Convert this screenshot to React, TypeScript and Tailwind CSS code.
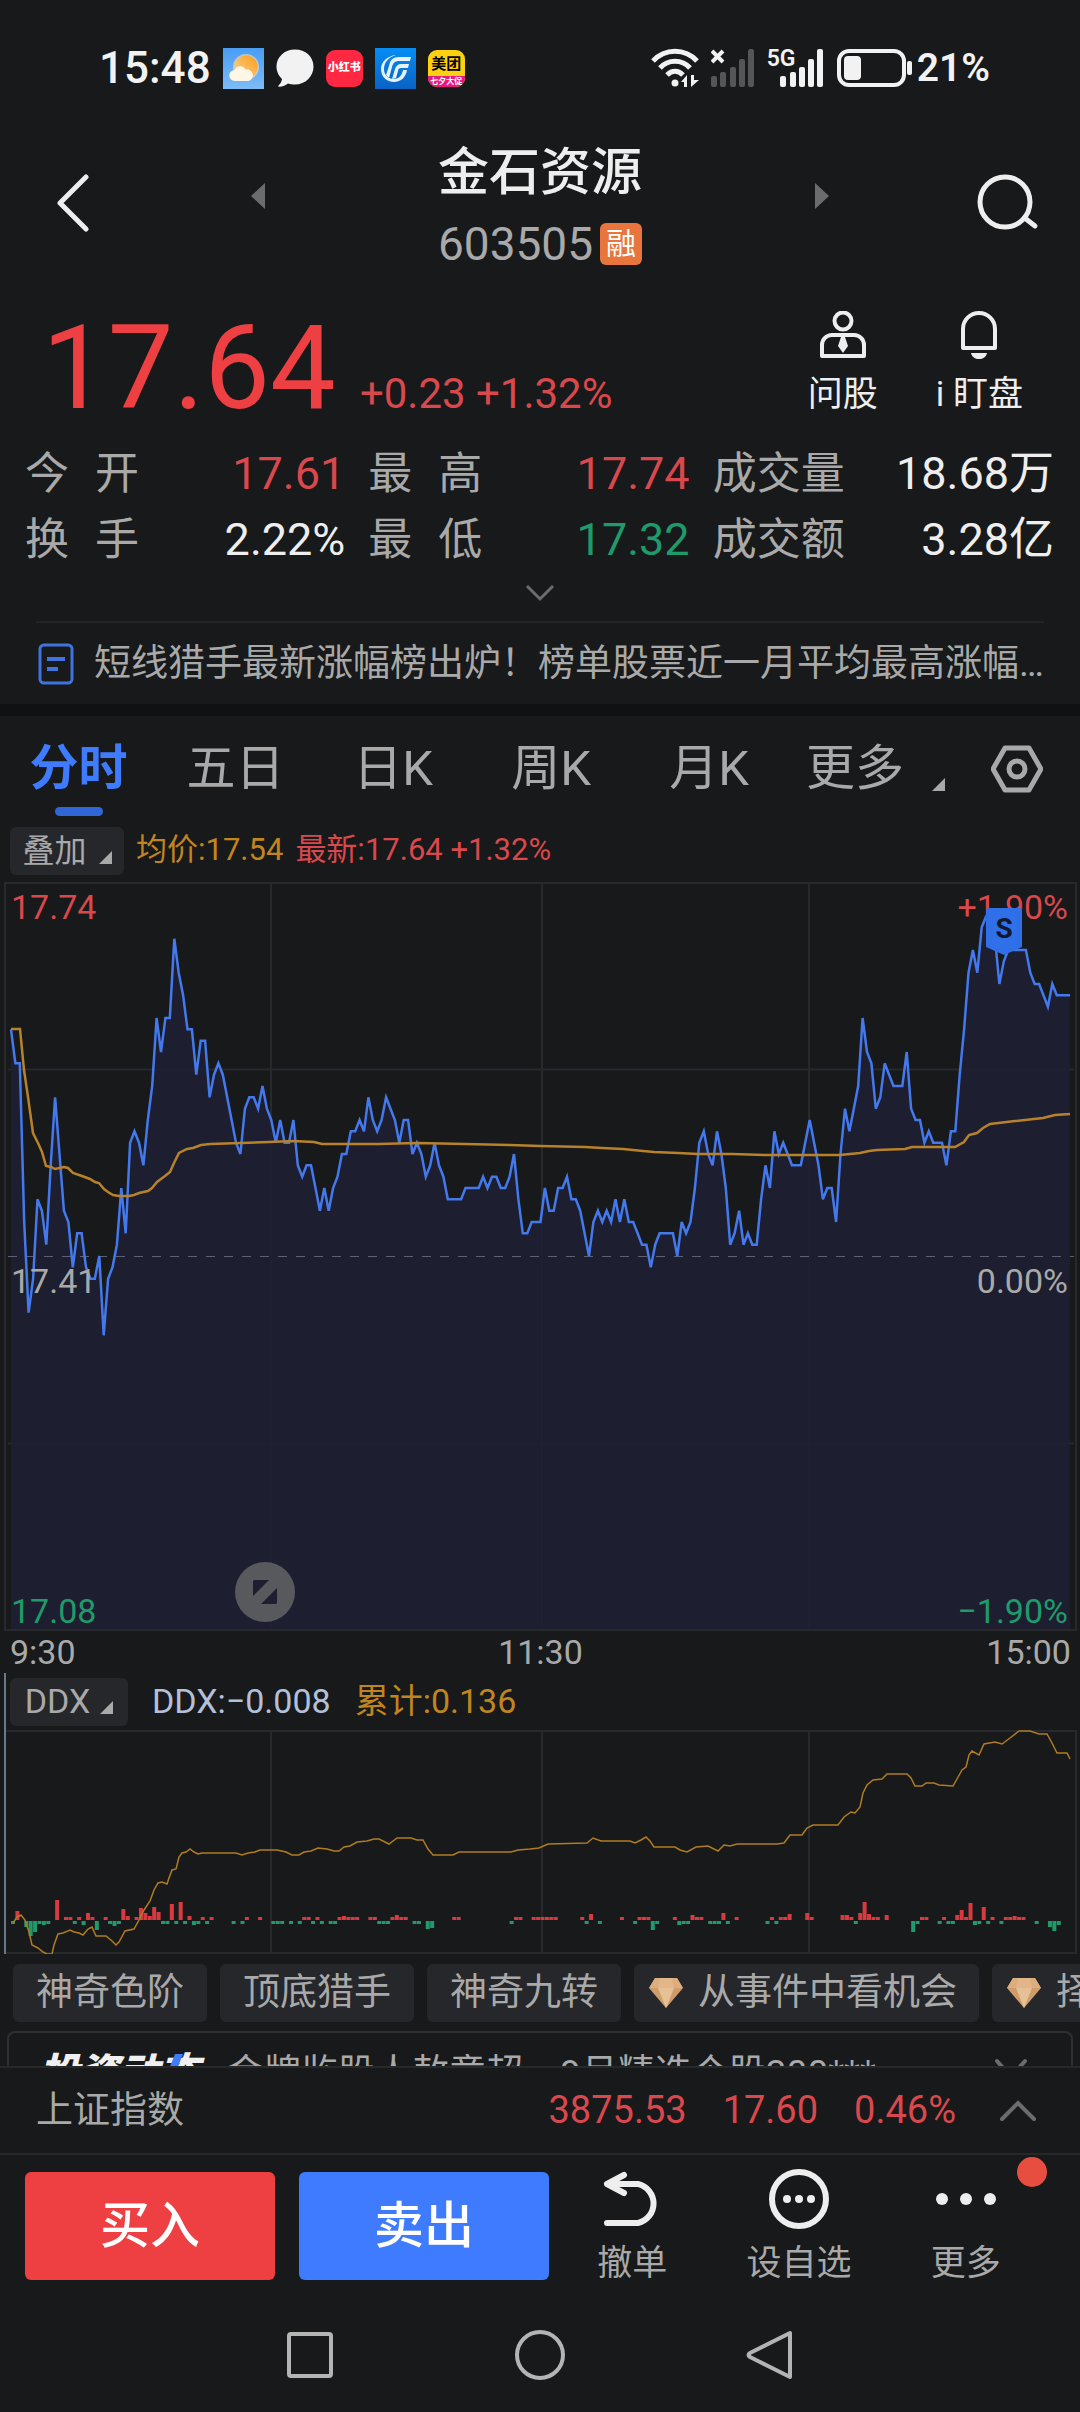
import type { ReactNode } from 'react';

// 每分钟价格相对昨收 17.41 的差值，单位：分
const PRICE_DIFF = [
  20, 17, 17, 3, -5, -2, 5, 4, 1, 8, 14, 9, 4, 3, -1, 2, 2, -1, -2, -2, 0, -7, -2, -1, 1, 6, 2, 10, 11, 10,
  8, 12, 15, 21, 18, 21, 21, 28, 25, 23, 20, 20, 16, 19, 19, 14, 16, 17, 16, 14, 12, 10, 9, 13, 14, 14, 13, 15, 13, 12,
  10, 12, 10, 10, 12, 8, 7, 8, 8, 6, 4, 6, 4, 6, 7, 9, 9, 11, 11, 12, 11, 14, 12, 11, 12, 14, 13, 12, 10, 12,
  12, 9, 10, 9, 7, 8, 10, 8, 7, 5, 5, 5, 5, 6, 6, 6, 6, 7, 6, 7, 7, 6, 6, 7, 9, 5, 2, 2, 3, 3,
  3, 6, 4, 4, 6, 6, 7, 5, 5, 4, 2, 0, 3, 4, 3, 4, 3, 5, 3, 5, 3, 3, 2, 1, 1, -1, 1, 2, 2, 2,
  2, 0, 3, 2, 3, 6, 10, 11, 9, 8, 11, 9, 6, 1, 2, 4, 1, 2, 1, 1, 5, 8, 6, 11, 9, 10, 9, 8, 8, 8,
  10, 12, 10, 8, 5, 6, 6, 3, 9, 13, 11, 13, 15, 21, 18, 17, 13, 14, 17, 16, 15, 15, 15, 18, 13, 12, 12, 10, 11, 10,
  10, 10, 8, 11, 11, 16, 20, 25, 27, 25, 29, 30, 30, 28, 24, 26, 27, 27, 27, 27, 27, 25, 24, 24, 23, 22, 24, 23, 23, 23, 23,
];

const AVG_LINE =
  '11,147 20,147 24,188 28,215 33,251 38,261 42,270 46,284 51,285 55,287 64,285 68,286 73,291 82,294 90,297 95,300 99,301 104,307 108,310 113,313 119,314 129,314 134,313 139,311 148,309 152,306 157,300 165,294 170,290 174,281 179,271 187,267 193,266 201,263 210,262 241,261 269,260 293,259 314,260 322,262 344,262 379,262 417,261 465,262 510,263 540,264 585,265 602,266 623,267 643,269 654,270 678,271 698,272 733,272 764,273 840,273 850,272 860,271 869,269 877,268 905,267 912,265 955,265 964,260 969,253 977,251 983,246 990,242 1015,239 1043,236 1055,233 1070,232';

const DDX_LINE =
  '13,193 17,187 21,185 25,190 29,202 32,215 38,218 43,222 47,224 52,224 54,215 58,204 63,203 70,200 74,202 79,203 83,205 88,199 92,197 96,206 106,206 112,211 116,215 119,212 125,201 134,199 139,190 144,180 150,171 154,160 158,153 162,152 167,154 169,148 172,140 176,139 179,127 182,123 186,122 190,119 194,122 198,124 202,123 236,123 242,125 248,123 255,122 260,120 277,120 286,122 292,125 299,125 304,122 311,121 318,118 327,119 334,121 339,121 344,117 350,116 357,112 367,111 374,109 379,109 389,114 397,108 411,108 417,110 423,110 428,119 433,125 453,125 459,122 511,122 518,120 530,119 539,118 548,114 587,113 593,108 601,111 630,111 635,113 641,110 646,107 650,111 654,117 675,117 680,120 687,122 696,117 708,116 718,121 724,115 730,116 737,114 777,114 784,113 790,105 802,105 807,98 813,95 838,95 844,87 851,82 855,83 860,77 863,63 867,55 873,50 882,49 887,44 907,44 911,48 915,56 922,56 926,53 934,53 939,55 953,56 957,49 962,40 966,37 969,25 972,21 979,25 984,14 995,12 1002,14 1010,8 1019,1 1030,1 1039,4 1047,4 1052,13 1057,23 1067,23 1070,29';

// [分钟, 柱高]，正为红、负为绿
const DDX_BARS: [number, number][] = [
  [0, -3], [1, 9], [3, -6], [4, -15], [5, -11], [6, -3], [7, -4], [8, -3], [10, 20], [12, 3], [13, 3], [14, -3],
  [15, 3], [16, -4], [17, 7], [18, 3], [19, -9], [21, 3], [22, -3], [23, -5], [24, -3], [25, 11], [26, 4], [28, 3],
  [29, 12], [30, 7], [31, 4], [32, 13], [33, 8], [34, -3], [35, -3], [36, 16], [37, -3], [38, 18], [39, -3], [40, 4],
  [41, -4], [42, -3], [43, 3], [44, -3], [45, 3], [50, -3], [52, -3], [53, 3], [56, 3], [59, -3], [60, -3], [61, -3],
  [63, -3], [65, -3], [66, 3], [67, 3], [68, -3], [69, 3], [70, -3], [72, -3], [73, -3], [74, 3], [75, 4], [76, 3],
  [77, 3], [78, 3], [81, 3], [82, 3], [83, -3], [84, -3], [85, -3], [86, 3], [87, 5], [88, 3], [89, 3], [91, -3],
  [92, -3], [94, -8], [95, -7], [100, 3], [101, 3], [113, -3], [114, 3], [115, 3], [118, 3], [119, 3], [120, 3],
  [121, 3], [122, 3], [123, 3], [129, 3], [130, -3], [131, 6], [133, -3], [138, 3], [141, -3], [142, 3], [143, 3],
  [144, 3], [145, -9], [146, -3], [150, 3], [151, -4], [152, -3], [153, -3], [154, 5], [155, 3], [156, 3], [158, -3],
  [159, -3], [160, -3], [161, 7], [162, -3], [164, 3], [171, -3], [172, 3], [173, -3], [174, 3], [175, 3], [176, 6],
  [180, 7], [181, 3], [188, 5], [189, 5], [190, 3], [191, -3], [192, 7], [193, 18], [194, 6], [195, 3], [196, 3],
  [198, 5], [204, -11], [205, -3], [206, 3], [207, 3], [210, -3], [211, 3], [212, -3], [213, -3], [214, 5], [215, 10],
  [216, 3], [217, 17], [218, -4], [219, -3], [220, 13], [221, -3], [222, 3], [224, -3], [225, 3], [226, 3], [227, 4],
  [228, 3], [229, 3], [232, -3], [235, -6], [236, -10], [237, -4],
];

const LEFT = 11;
const STEP = 1059 / 240;
const ZERO_Y = 374;
const CENT = 374 / 33;

const minuteX = (i: number) => LEFT + i * STEP;
const pricePoints = PRICE_DIFF.map((d, i) => `${minuteX(i).toFixed(1)},${(ZERO_Y - d * CENT).toFixed(1)}`).join(' ');

const STATS = [
  { label: '今开', value: '17.61', color: 'text-[#d9484c]' },
  { label: '最高', value: '17.74', color: 'text-[#d9484c]' },
  { label: '成交量', value: '18.68万', color: 'text-[#eeeeee]' },
  { label: '换手', value: '2.22%', color: 'text-[#eeeeee]' },
  { label: '最低', value: '17.32', color: 'text-[#1f9a6b]' },
  { label: '成交额', value: '3.28亿', color: 'text-[#eeeeee]' },
];

const TABS = ['分时', '五日', '日K', '周K', '月K'];

const CHIPS = [
  { name: '神奇色阶', vip: false },
  { name: '顶底猎手', vip: false },
  { name: '神奇九转', vip: false },
  { name: '从事件中看机会', vip: true },
  { name: '择时', vip: true },
];

const Corner = () => (
  <svg className="h-[13px] w-[13px] shrink-0" viewBox="0 0 12 12" fill="#a9a9a9">
    <path d="M12 0v12H0z" />
  </svg>
);

const StatusBar = () => (
  <div className="flex h-[136px] items-center justify-between pl-[99px] pr-[90px] text-[#f2f2f2]">
    <div className="flex items-center gap-3">
      <span className="text-[44px] font-medium leading-[48px]">15:48</span>
      {/* 天气 */}
      <svg className="h-[41px] w-[41px]" viewBox="0 0 41 41">
        <defs>
          <linearGradient id="sky" x1="0" y1="0" x2="0" y2="1">
            <stop offset="0" stopColor="#4a9cf5" />
            <stop offset="1" stopColor="#7dbcf8" />
          </linearGradient>
          <linearGradient id="sun" x1="1" y1="0" x2="0" y2="1">
            <stop offset="0" stopColor="#fb9a1d" />
            <stop offset="1" stopColor="#fdd68f" />
          </linearGradient>
        </defs>
        <rect width="41" height="41" fill="url(#sky)" />
        <circle cx="23" cy="19" r="13" fill="#f9e3b0" opacity="0.6" />
        <circle cx="23" cy="19" r="11.5" fill="url(#sun)" />
        <path d="M12 33a5.500 5.500 0 0 1-.5-11 6 6 0 0 1 11-.5 5 5 0 0 1 3 11.500z" fill="#fff6e6" />
      </svg>
      <svg className="h-[38px] w-[38px]" viewBox="0 0 38 38" fill="#f2f2f2">
        <path d="M19 .5C8.500.5.5 8 .5 17.500c0 5.500 2.500 9.500 5.500 12.500-.5 3-1.500 4.500-3.500 6.500-.5 1 0 1.500 1 1.300 3.500-.3 6-1.300 8.500-3.300 2 .7 4.500 1 7 1 10.500 0 18.500-8 18.500-18S29.500.5 19 .5z" />
      </svg>
      <span className="flex h-[37px] w-[37px] items-center justify-center rounded-[9px] bg-[#ff2741] text-[11px] font-black text-white">
        小红书
      </span>
      <svg className="h-[41px] w-[41px]" viewBox="0 0 41 41">
        <defs>
          <linearGradient id="broker" x1="0" y1="0" x2="0" y2="1">
            <stop offset="0" stopColor="#058ef5" />
            <stop offset="1" stopColor="#0a62c4" />
          </linearGradient>
        </defs>
        <rect width="41" height="41" fill="url(#broker)" />
        <path
          d="M21 7C12 8 6 14 6 21c0 8 6 13 13 13s12-5 13-12h-4c-1 5-4 9-9 9-6 0-10-4-10-10 0-7 5-12 12-14z"
          fill="#e6f2ff"
        />
        <path d="M36 9l-1 4H24c-4 0-6 2-7 6l-3 11-3-3 3-9c1-6 4-9 10-9zM34 16l-1 4h-7c-2 0-3 1-3 3l-2 7-4 1 3-10c1-3 3-5 6-5z" fill="#e6f2ff" />
      </svg>
      <span className="flex h-[37px] w-[37px] flex-col items-center overflow-hidden rounded-[9px] bg-[#ffd00f] text-black">
        <span className="h-[26px] text-[15px] font-bold leading-[28px]">美团</span>
        <span className="w-full grow bg-[#e6197f] text-center text-[8px] font-bold leading-[11px] text-white">七夕大促</span>
      </span>
    </div>
    <div className="flex items-center gap-3">
      <svg className="h-[40px] w-[48px]" viewBox="0 0 48 40" fill="none" stroke="#f2f2f2" strokeWidth="5">
        <path d="M2 13c12-13 32-13 44 0M9 20c8-9 22-9 30 0M16 27c5-5 11-5 16 0" />
        <circle cx="24" cy="35" r="3.500" fill="#f2f2f2" stroke="none" />
        <path d="M30 34l6-7v12h-3v-5zM40 27v12l8-7h-5v-5z" fill="#f2f2f2" stroke="none" />
      </svg>
      <svg className="h-[40px] w-[44px]" viewBox="0 0 44 40" stroke="#f2f2f2" strokeWidth="4">
        <path d="M1 3l11 11M12 3L1 14" fill="none" />
        <g fill="#555658" stroke="none">
          <rect x="0" y="28" width="6" height="11" rx="2" />
          <rect x="9" y="24" width="6" height="15" rx="2" />
          <rect x="19" y="19" width="6" height="20" rx="2" />
          <rect x="28" y="11" width="6" height="28" rx="2" />
          <rect x="37" y="1" width="6" height="38" rx="2" />
        </g>
      </svg>
      <div className="relative h-[40px] w-[57px]">
        <span className="absolute left-0 top-0 text-[23px] font-semibold leading-[22px]">5G</span>
        <svg className="h-[40px] w-[57px]" viewBox="0 0 57 40" fill="#f2f2f2">
          <rect x="13" y="28" width="6" height="11" rx="2" />
          <rect x="23" y="24" width="6" height="15" rx="2" />
          <rect x="32" y="19" width="6" height="20" rx="2" />
          <rect x="41" y="11" width="6" height="28" rx="2" />
          <rect x="50" y="1" width="6" height="38" rx="2" />
        </svg>
      </div>
      <div className="flex items-center gap-1">
        <svg className="h-[40px] w-[77px]" viewBox="0 0 77 40">
          <rect x="3" y="3" width="65" height="34" rx="10" fill="none" stroke="#f2f2f2" strokeWidth="4" />
          <rect x="8" y="8" width="17" height="24" rx="4" fill="#f2f2f2" />
          <rect x="71" y="13" width="5" height="14" rx="2" fill="#f2f2f2" />
        </svg>
        <span className="text-[39px] font-semibold leading-[48px]">21%</span>
      </div>
    </div>
  </div>
);

const Header = () => (
  <header className="grid grid-cols-[1fr_auto_1fr] items-center pb-[46px] pt-[7px]">
    <div className="flex items-center justify-between pl-[55px] pr-[173px]">
      <button aria-label="返回">
        <svg className="h-[60px] w-[36px]" viewBox="0 0 36 60" fill="none" stroke="#eeeeee" strokeWidth="5" strokeLinecap="round" strokeLinejoin="round">
          <path d="M31 3L5 29l26 26" />
        </svg>
      </button>
      <button aria-label="上一只" className="pb-4">
        <svg className="h-[26px] w-[14px]" viewBox="0 0 14 26" fill="#6b6c6d">
          <path d="M14 0v26L0 13z" />
        </svg>
      </button>
    </div>
    <div className="flex flex-col items-center">
      <h1 className="text-[51px] font-medium leading-[60px] text-[#eeeeee]">金石资源</h1>
      <div className="mt-5 flex items-center gap-[7px]">
        <span className="text-[46px] leading-[42px] text-[#a9a9a9]">603505</span>
        <span className="flex h-[42px] w-[42px] items-center justify-center rounded-md bg-[#e8763c] text-[30px] leading-[42px] text-white">
          融
        </span>
      </div>
    </div>
    <div className="flex items-center justify-between pl-[173px] pr-10">
      <button aria-label="下一只" className="pb-4">
        <svg className="h-[26px] w-[14px]" viewBox="0 0 14 26" fill="#6b6c6d">
          <path d="M0 0v26l14-13z" />
        </svg>
      </button>
      <button aria-label="搜索">
        <svg className="h-[60px] w-[64px]" viewBox="0 0 64 60" fill="none" stroke="#eeeeee" strokeWidth="5" strokeLinecap="round">
          <circle cx="29" cy="28" r="25" />
          <path d="M50 45l9 7" />
        </svg>
      </button>
    </div>
  </header>
);

const QuoteAction = ({ label, children }: { label: string; children: ReactNode }) => (
  <button className="flex flex-col items-center gap-4 text-[35px] leading-10 text-[#eeeeee]">
    {children}
    {label}
  </button>
);

const Quote = () => (
  <section>
    <div className="flex items-start justify-between pl-[42px] pr-[57px]">
      <div className="flex items-baseline gap-6">
        <span className="text-[117px] leading-[114px] text-[#ee3f43]">17.64</span>
        <span className="text-[42px] text-[#d9484c]">+0.23 +1.32%</span>
      </div>
      <div className="flex gap-[58px]">
        <QuoteAction label="问股">
          <svg className="h-12 w-12" viewBox="0 0 48 48" fill="none" stroke="#eeeeee" strokeWidth="4">
            <circle cx="24" cy="10" r="8.500" />
            <path d="M13 24h22a10 10 0 0 1 10 10v11H3V34a10 10 0 0 1 10-10z" strokeLinejoin="round" />
            <path d="M22 26h4l3 9-5 7-5-7z" fill="#eeeeee" stroke="none" />
          </svg>
        </QuoteAction>
        <QuoteAction label="i 盯盘">
          <svg className="h-12 w-12" viewBox="0 0 48 48" fill="none" stroke="#eeeeee" strokeWidth="4">
            <path d="M8 37V18a16 16 0 0 1 32 0v19z" strokeLinejoin="round" />
            <path d="M16 42h16c-1 4-4 6-8 6s-7-2-8-6z" fill="#eeeeee" stroke="none" />
          </svg>
        </QuoteAction>
      </div>
    </div>
    <dl className="grid grid-cols-[320fr_321fr_341fr] gap-x-[23px] pl-[25px] pr-[26px] pt-4 text-[44px] leading-[66px]">
      {STATS.map((s) => (
        <div key={s.label} className="flex justify-between">
          <dt className={s.label.length === 2 ? 'flex gap-[26px] text-[#a9a9a9]' : 'text-[#a9a9a9]'}>
            {s.label.length === 2 ? s.label.split('').map((c) => <span key={c}>{c}</span>) : s.label}
          </dt>
          <dd className={`text-[45px] ${s.color}`}>{s.value}</dd>
        </div>
      ))}
    </dl>
    <div className="mx-9 flex h-[50px] justify-center border-b-2 border-[#222426] pt-[10px]">
      <button aria-label="展开" className="self-start">
        <svg className="h-5 w-8" viewBox="0 0 32 20" fill="none" stroke="#6b6c6d" strokeWidth="3">
          <path d="M3 3l13 13L29 3" />
        </svg>
      </button>
    </div>
    <a href="#news" className="flex h-[81px] items-center gap-5 pl-[38px] pr-9">
      <svg className="h-[42px] w-9 shrink-0" viewBox="0 0 36 42" fill="none" stroke="#4173e0" strokeWidth="3">
        <rect x="2" y="2" width="32" height="38" rx="4" />
        <path d="M9 16h18M9 26h11" strokeWidth="4" />
      </svg>
      <span className="truncate text-[37px] leading-[48px] text-[#a9a9a9]">
        短线猎手最新涨幅榜出炉！榜单股票近一月平均最高涨幅...
      </span>
    </a>
  </section>
);

const Tabs = () => (
  <nav className="grid h-[104px] grid-cols-[157fr_157fr_158fr_158fr_158fr_292fr] pt-px text-[49px] text-[#a9a9a9]">
    {TABS.map((tab, i) => (
      <button key={tab} className={i === 0 ? 'relative font-bold text-[#3f7bff]' : ''}>
        {tab}
        {i === 0 && <span className="absolute bottom-1 left-1/2 h-[9px] w-12 -translate-x-1/2 rounded-full bg-[#3066d6]" />}
      </button>
    ))}
    <div className="flex items-center justify-between pl-[18px] pr-[37px]">
      <button className="flex items-center gap-[28px]">
        更多
        <span className="pt-8">
          <Corner />
        </span>
      </button>
      <button aria-label="设置">
        <svg className="h-[50px] w-[52px]" viewBox="0 0 52 50" fill="none" stroke="#a9a9a9" strokeWidth="5" strokeLinejoin="round">
          <path d="M14 4h24l12 21-12 21H14L2 25z" />
          <circle cx="26" cy="25" r="8" />
        </svg>
      </button>
    </div>
  </nav>
);

const Expand = () => (
  <svg className="h-6 w-6" viewBox="0 0 24 24" fill="#1e1e30">
    <path d="M1 0h15L0 16V1zM24 8v15l-1 1H8z" />
  </svg>
);

const PriceChart = () => (
  <section>
    <div className="flex h-[62px] items-center gap-3 pl-[10px] text-[31px]">
      <button className="flex h-12 w-[114px] items-center justify-center gap-3 rounded-md bg-[#25272b] text-[32px] text-[#a9a9a9]">
        叠加
        <span className="pt-3">
          <Corner />
        </span>
      </button>
      <span className="pb-px text-[#c0851f]">均价:17.54</span>
      <span className="pb-px text-[#d9484c]">最新:17.64 +1.32%</span>
    </div>
    <div className="relative text-[34px] leading-10">
      <svg className="block w-full" viewBox="0 0 1080 749">
        <g stroke="#27292c" strokeWidth="2" fill="none">
          <rect x="5" y="1" width="1071" height="747" />
          <path d="M271 0v749M542 0v749M809 0v749" />
          <path d="M8 187.500h1066M8 561.500h1066" />
        </g>
        <polygon points={`11,747 ${pricePoints} 1070,747`} fill="#1f1f33" fillOpacity="0.88" />
        <path d="M8 374.500h1066" stroke="#5f6075" strokeWidth="1" strokeDasharray="9 9" />
        <polyline points={pricePoints} fill="none" stroke="#4379ec" strokeWidth="2.500" />
        <polyline points={AVG_LINE} fill="none" stroke="#b8822a" strokeWidth="2.500" />
      </svg>
      <span className="absolute left-[11px] top-[5px] text-[#d9484c]">17.74</span>
      <span className="absolute right-3 top-[5px] text-[#d9484c]">+1.90%</span>
      <span className="absolute left-[11px] top-[379px] text-[#a9a9a9]">17.41</span>
      <span className="absolute right-3 top-[379px] text-[#a9a9a9]">0.00%</span>
      <span className="absolute bottom-0 left-[11px] text-[#1f9a6b]">17.08</span>
      <span className="absolute bottom-0 right-3 text-[#1f9a6b]">−1.90%</span>
      <span className="absolute right-[58px] top-[26px] h-[47px] w-9">
        <svg className="absolute inset-0" viewBox="0 0 36 47" fill="#2f6fe8">
          <path d="M3 0h30a3 3 0 0 1 3 3v36l-18 8L0 39V3a3 3 0 0 1 3-3z" />
        </svg>
        <span className="absolute inset-x-0 top-0 text-center text-[28px] font-bold leading-[42px] text-[#11182e]">S</span>
      </span>
      <button
        aria-label="横屏"
        className="absolute bottom-[9px] left-[235px] flex h-[60px] w-[60px] items-center justify-center rounded-full bg-[#58595c]"
      >
        <Expand />
      </button>
    </div>
    <div className="grid grid-cols-3 pl-[10px] pr-[9px] text-[34px] leading-[42px] text-[#a9a9a9]">
      <span>9:30</span>
      <span className="text-center">11:30</span>
      <span className="text-right">15:00</span>
    </div>
  </section>
);

const DdxChart = () => (
  <section className="relative">
    <span className="absolute bottom-0 left-[4px] top-0 w-[2px] bg-[#6b7888]" />
    <div className="flex h-[57px] items-center gap-6 pl-[10px] text-[34px]">
      <button className="flex h-12 w-[118px] items-center justify-center gap-[10px] rounded-md bg-[#25272b] text-[#a9a9a9]">
        DDX
        <span className="pt-3">
          <Corner />
        </span>
      </button>
      <span className="text-[#b4c0da]">DDX:−0.008</span>
      <span className="text-[#c0851f]">累计:0.136</span>
    </div>
    <svg className="block w-full" viewBox="0 0 1080 224">
      <g stroke="#27292c" strokeWidth="2" fill="none">
        <path d="M5 1h1071v222H5M271 0v224M542 0v224M809 0v224" />
      </g>
      {DDX_BARS.map(([i, v]) => (
        <rect
          key={i}
          x={minuteX(i)}
          y={v > 0 ? 190 - v : 191}
          width="4"
          height={Math.abs(v)}
          fill={v > 0 ? '#d93a40' : '#1f9a6b'}
        />
      ))}
      <polyline points={DDX_LINE} fill="none" stroke="#b07c22" strokeWidth="1.500" />
    </svg>
  </section>
);

const Diamond = () => (
  <svg className="h-[32px] w-[34px] shrink-0" viewBox="0 0 34 32">
    <path d="M6 1h22l6 10-17 20L0 11z" fill="#cf9d6b" />
    <path d="M6 1h22l6 10H0z" fill="#dcae7e" />
    <path d="M9 11h16l-8 20z" fill="#e6c196" />
    <path d="M11 1h12l2 10H9z" fill="#e2b688" />
  </svg>
);

const Chips = () => (
  <div className="flex gap-[13px] overflow-hidden pl-[13px] pt-[10px]">
    {CHIPS.map((chip) => (
      <button
        key={chip.name}
        className={
          chip.vip
            ? 'flex h-[58px] shrink-0 items-center gap-[15px] rounded-md bg-[#25272b] pl-[15px] pr-[22px] text-[37px] text-[#a9a9a9]'
            : 'flex h-[58px] shrink-0 items-center rounded-md bg-[#25272b] px-[23px] text-[37px] text-[#a9a9a9]'
        }
      >
        {chip.vip && <Diamond />}
        {chip.name}
      </button>
    ))}
  </div>
);

const NewsCard = () => (
  <div className="mx-[7px] mt-[9px] h-[35px] overflow-hidden rounded-t-lg border-2 border-b-0 border-[#2d2f32]">
    <div className="flex h-[82px] items-center pl-[30px] pr-[42px]">
      <span className="relative text-[40px] font-black italic leading-[48px] text-[#f0f0f0]">
        投资动态
        <svg className="absolute right-4 top-1 h-10 w-6" viewBox="0 0 24 40">
          <path d="M16 0h8L8 40H0z" fill="#3f7bff" />
        </svg>
      </span>
      <span className="ml-7 grow text-[37px] leading-[48px] text-[#a9a9a9]">金牌监股人敖意超，9月精选个股300***</span>
      <svg className="mb-2 h-6 w-9" viewBox="0 0 36 24" fill="none" stroke="#6b6c6d" strokeWidth="4" strokeLinecap="round">
        <path d="M4 3l14 16L32 3" />
      </svg>
    </div>
  </div>
);

const IndexBar = () => (
  <div className="flex h-[87px] items-center border-t-2 border-[#26282a] pl-9 pr-[42px] text-[38px] text-[#d9484c]">
    <span className="grow text-[37px] text-[#a9a9a9]">上证指数</span>
    <span>3875.53</span>
    <span className="ml-9">17.60</span>
    <span className="ml-9">0.46%</span>
    <button aria-label="展开指数" className="ml-[42px]">
      <svg className="h-6 w-10" viewBox="0 0 40 24" fill="none" stroke="#6b6c6d" strokeWidth="4" strokeLinecap="round">
        <path d="M4 20L20 4l16 16" />
      </svg>
    </button>
  </div>
);

const ToolButton = ({ label, dot, children }: { label: string; dot?: boolean; children: ReactNode }) => (
  <button className="relative flex flex-col items-center gap-[15px] text-[35px] leading-10 text-[#a9a9a9]">
    {children}
    {label}
    {dot && <span className="absolute -top-3 right-[2px] h-[30px] w-[30px] rounded-full bg-[#e84e40]" />}
  </button>
);

const TradeBar = () => (
  <div className="flex border-t-2 border-[#26282a] pl-[25px] pr-[31px] pt-[14px]">
    <div className="flex flex-[524] gap-6 pt-[3px] text-[50px] font-medium text-white">
      <button className="h-[108px] flex-1 rounded-md bg-[#ee3f43]">买入</button>
      <button className="h-[108px] flex-1 rounded-md bg-[#3f7bff]">卖出</button>
    </div>
    <div className="grid flex-[500] grid-cols-3">
      <ToolButton label="撤单">
        <svg className="h-[60px] w-[60px]" viewBox="0 0 60 60" fill="none" stroke="#eeeeee" strokeWidth="6" strokeLinecap="round" strokeLinejoin="round">
          <path d="M22 6L5 15l17 9M5 15h31a20 20 0 0 1 0 39H5" />
        </svg>
      </ToolButton>
      <ToolButton label="设自选">
        <svg className="h-[60px] w-[60px]" viewBox="0 0 60 60" fill="#eeeeee">
          <circle cx="30" cy="30" r="27" fill="none" stroke="#eeeeee" strokeWidth="6" />
          <circle cx="18" cy="30" r="4" />
          <circle cx="30" cy="30" r="4" />
          <circle cx="42" cy="30" r="4" />
        </svg>
      </ToolButton>
      <ToolButton label="更多" dot>
        <svg className="h-[60px] w-[60px]" viewBox="0 0 60 60" fill="#eeeeee">
          <circle cx="6" cy="30" r="6" />
          <circle cx="30" cy="30" r="6" />
          <circle cx="54" cy="30" r="6" />
        </svg>
      </ToolButton>
    </div>
  </div>
);

const SystemNav = () => (
  <nav className="flex h-[128px] items-center justify-center gap-[178px] pt-[14px]">
    <button aria-label="最近任务">
      <svg className="h-[52px] w-[52px]" viewBox="0 0 52 52" fill="none" stroke="#b4b4b4" strokeWidth="4">
        <rect x="5" y="5" width="42" height="42" rx="2" />
      </svg>
    </button>
    <button aria-label="主屏幕">
      <svg className="h-[52px] w-[52px]" viewBox="0 0 52 52" fill="none" stroke="#b4b4b4" strokeWidth="4">
        <circle cx="26" cy="26" r="23" />
      </svg>
    </button>
    <button aria-label="系统返回">
      <svg className="h-[52px] w-[52px]" viewBox="0 0 52 52" fill="none" stroke="#b4b4b4" strokeWidth="4" strokeLinejoin="round">
        <path d="M46 4v44L6 28q-3-2 0-4z" />
      </svg>
    </button>
  </nav>
);

export default function App() {
  return (
    <main className="min-h-screen w-full overflow-hidden bg-[#17191a] font-[Roboto,'Noto_Sans_CJK_SC',sans-serif]">
      <StatusBar />
      <Header />
      <Quote />
      <div className="h-3 bg-[#101113]" />
      <Tabs />
      <PriceChart />
      <DdxChart />
      <Chips />
      <NewsCard />
      <IndexBar />
      <TradeBar />
      <SystemNav />
    </main>
  );
}
